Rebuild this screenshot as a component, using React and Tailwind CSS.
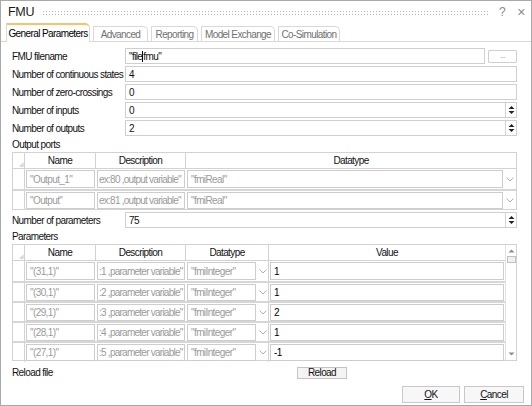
import React from 'react';

const FIELDS = [
  { label:'Number of continuous states', value:'4' },
  { label:'Number of zero-crossings',    value:'0' },
  { label:'Number of inputs',            value:'0', spin:true },
  { label:'Number of outputs',           value:'2', spin:true },
];

const OUTPUTS = [
  { name:'"Output_1"', desc:'ex:80 ,output variable"', type:'"fmiReal"' },
  { name:'"Output"',   desc:'ex:81 ,output variable"', type:'"fmiReal"' },
];

const PARAMS = [
  { name:'"(31,1)"', desc:':1 ,parameter variable"', type:'"fmiInteger"', value:'1' },
  { name:'"(30,1)"', desc:':2 ,parameter variable"', type:'"fmiInteger"', value:'1' },
  { name:'"(29,1)"', desc:':3 ,parameter variable"', type:'"fmiInteger"', value:'2' },
  { name:'"(28,1)"', desc:':4 ,parameter variable"', type:'"fmiInteger"', value:'1' },
  { name:'"(27,1)"', desc:':5 ,parameter variable"', type:'"fmiInteger"', value:'-1' },
];

const TABS = [
  { label:'General Parameters', w:'w-[84px]', active:true },
  { label:'Advanced',           w:'w-[55px]' },
  { label:'Reporting',          w:'w-[47px]' },
  { label:'Model Exchange',     w:'w-[74px]' },
  { label:'Co-Simulation',      w:'w-[62px]' },
];

function Spin() {
  return (
    <div className="w-[11px] h-full flex flex-col items-center justify-center border-l border-[#d4d4d4] leading-none">
      <svg width="7" height="10" viewBox="0 0 7 10"><path d="M0.5 4 L3.5 1 L6.5 4 Z M0.5 6 L3.5 9 L6.5 6 Z" fill="#222"/></svg>
    </div>
  );
}

function Chevron() {
  return (
    <svg width="8" height="5" viewBox="0 0 8 5"><path d="M0.5 0.5 L4 4 L7.5 0.5" stroke="#b0b0b0" fill="none"/></svg>
  );
}

function Cell({ children, dark, tight }) {
  return (
    <div className="p-px h-full min-w-0">
      <div className={`h-full border border-[#cdcdcd] bg-white flex items-center overflow-hidden ${tight?'px-px tracking-[-0.75px]':'px-[3px]'} ${dark?'text-black':'text-[#9a9a9a]'}`}>{children}</div>
    </div>
  );
}

function Field({ label, value, spin }) {
  return (
    <div className="h-[16px] flex items-center">
      <div className="w-[113px] shrink-0">{label}</div>
      <div className="h-full flex-1 flex border border-[#cfcfcf]">
        <div className="flex-1 flex items-center px-[3px]">{value}</div>
        {spin && <Spin/>}
      </div>
    </div>
  );
}

export default function App() {
  return (
    <div className="w-[532px] h-[406px] bg-white border border-[#a9a9a9] flex flex-col text-[10px] tracking-[-0.6px] whitespace-nowrap text-[#111] overflow-hidden"
      style={{ fontFamily:'"Liberation Sans", Arial, sans-serif' }}>
      {/* title */}
      <div className="h-[22px] flex items-center pl-[7px] pr-[4px] gap-[8px] shrink-0">
        <span className="text-[12.5px] tracking-[-0.3px] text-[#1a1a1a]">FMU</span>
        <div className="flex-1 h-[5px] bg-[radial-gradient(circle,#b5b5b5_0.7px,transparent_0.9px)] bg-[length:3px_3px]"></div>
        <span className="text-[12px] text-[#8a8a8a] w-[10px] text-center">?</span>
        <span className="text-[14px] text-[#8a8a8a] w-[12px] text-center leading-none">×</span>
      </div>

      {/* tabs */}
      <div className="h-[19px] flex items-end pl-[5px] gap-[3px] border-b border-[#d9d9d9] shrink-0">
        {TABS.map(t=>(
          <div key={t.label}
            className={`${t.w} flex items-center justify-center border-x border-t rounded-tr-[5px] ${t.active?'h-[19px] -mb-px bg-white border-[#d9d9d9] border-t-2 border-t-[#f3c46b] text-black':'h-[15px] border-[#d9d9d9] text-[#707070]'}`}>
            {t.label}
          </div>
        ))}
      </div>

      {/* content */}
      <div className="flex-1 flex flex-col pl-[11px] pr-[14px] pt-[6px]">
        <div className="flex flex-col gap-[2px]">
          <div className="h-[16px] flex items-center">
            <div className="w-[113px] shrink-0">FMU filename</div>
            <div className="h-full flex-1 flex items-center border border-[#cfcfcf] px-[3px]">
              <span>"file</span><span className="w-px h-[11px] bg-black"></span><span>fmu"</span>
            </div>
            <div className="ml-[3px] w-[29px] h-[13px] border border-[#cfcfcf] rounded-[1px] flex items-center justify-center text-[#a07bc0] text-[8px] leading-none">...</div>
          </div>
          {FIELDS.map(f=><Field key={f.label} {...f}/>)}
        </div>

        <div className="h-[16px] flex items-center">Output ports</div>
        <div className="border border-[#d2d2d2]">
          <div className="grid grid-cols-[12px_71px_90px_1fr] h-[16px] border-b border-[#d2d2d2]">
            <div className="border-r border-[#d2d2d2] flex items-end justify-end pr-px pb-px text-[#d6d6d6] text-[6px] leading-none">◢</div>
            <div className="border-r border-[#d2d2d2] flex items-center justify-center">Name</div>
            <div className="border-r border-[#d2d2d2] flex items-center justify-center">Description</div>
            <div className="flex items-center justify-center">Datatype</div>
          </div>
          {OUTPUTS.map((r,i)=>(
            <div key={r.name} className={`grid grid-cols-[12px_71px_90px_1fr_12px] h-[20px] ${i?'border-t-2 border-[#d6d6d6]':''}`}>
              <div className="border-r border-[#d2d2d2]"></div>
              <Cell>{r.name}</Cell>
              <Cell tight>{r.desc}</Cell>
              <Cell>{r.type}</Cell>
              <div className="flex items-center justify-center"><Chevron/></div>
            </div>
          ))}
        </div>

        <div className="mt-[2px]">
          <Field label="Number of parameters" value="75" spin/>
        </div>

        <div className="h-[16px] flex items-center">Parameters</div>
        <div className="border border-[#d2d2d2] flex h-[117px]">
          <div className="flex-1 flex flex-col">
            <div className="grid grid-cols-[12px_71px_90px_83px_1fr] h-[16px] border-b border-[#d2d2d2] shrink-0">
              <div className="border-r border-[#d2d2d2] flex items-end justify-end pr-px pb-px text-[#d6d6d6] text-[6px] leading-none">◢</div>
              <div className="border-r border-[#d2d2d2] flex items-center justify-center">Name</div>
              <div className="border-r border-[#d2d2d2] flex items-center justify-center">Description</div>
              <div className="border-r border-[#d2d2d2] flex items-center justify-center">Datatype</div>
              <div className="flex items-center justify-center">Value</div>
            </div>
            {PARAMS.map((r,i)=>(
              <div key={r.name} className={`grid grid-cols-[12px_71px_90px_71px_12px_1fr] h-[20px] shrink-0 ${i?'border-t-2 border-[#d6d6d6]':''}`}>
                <div className="border-r border-[#d2d2d2]"></div>
                <Cell>{r.name}</Cell>
                <Cell tight>{r.desc}</Cell>
                <Cell>{r.type}</Cell>
                <div className="flex items-center justify-center border-r border-[#d2d2d2]"><Chevron/></div>
                <Cell dark>{r.value}</Cell>
              </div>
            ))}
          </div>
          {/* scrollbar */}
          <div className="w-[11px] border-l border-[#e2e2e2] flex flex-col items-center bg-white">
            <svg className="mt-[4px]" width="7" height="4" viewBox="0 0 7 4"><path d="M0.5 3.5 L3.5 0.5 L6.5 3.5 Z" fill="#8a8a8a"/></svg>
            <div className="mt-[3px] w-[9px] h-[7px] border border-[#c2c2c2] bg-[#f0f0f0]"></div>
            <div className="flex-1"></div>
            <svg className="mb-[4px]" width="7" height="4" viewBox="0 0 7 4"><path d="M0.5 0.5 L3.5 3.5 L6.5 0.5 Z" fill="#8a8a8a"/></svg>
          </div>
        </div>

        <div className="h-[15px] mt-[4px] flex items-center">
          <div className="w-[285px] shrink-0">Reload file</div>
          <div className="w-[50px] h-[12px] border border-[#c4c4c4] bg-[#f4f4f4] flex items-center justify-center leading-none">Reload</div>
        </div>

        <div className="flex justify-end gap-[4px] mt-[6px] -mr-[7px]">
          <div className="w-[58px] h-[17px] border border-[#c8c8c8] bg-[#f7f7f7] flex items-center justify-center"><span><u>O</u>K</span></div>
          <div className="w-[60px] h-[17px] border border-[#c8c8c8] bg-[#f7f7f7] flex items-center justify-center"><span><u>C</u>ancel</span></div>
        </div>
      </div>
    </div>
  );
}
